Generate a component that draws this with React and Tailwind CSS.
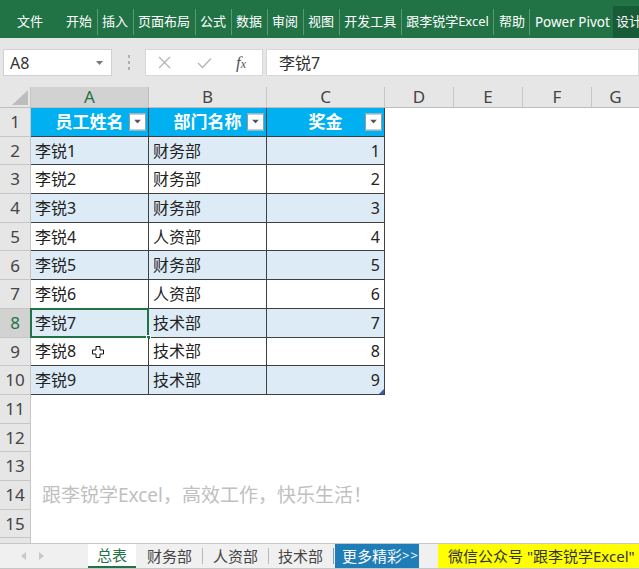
import React from "react";

const FONT = "font-[family-name:'Noto_Sans','Noto_Sans_CJK_SC',sans-serif]";

const TABS = ["开始", "插入", "页面布局", "公式", "数据", "审阅", "视图", "开发工具", "跟李锐学Excel", "帮助", "Power Pivot"];

const DATA = [
  ["李锐1", "财务部", 1],
  ["李锐2", "财务部", 2],
  ["李锐3", "财务部", 3],
  ["李锐4", "人资部", 4],
  ["李锐5", "财务部", 5],
  ["李锐6", "人资部", 6],
  ["李锐7", "技术部", 7],
  ["李锐8", "技术部", 8],
  ["李锐9", "技术部", 9],
];

function FilterBtn() {
  return (
    <div className="absolute right-[2px] top-1/2 -translate-y-1/2 w-[17px] h-[17px] bg-white border border-[#9a9a9a] flex items-center justify-center">
      <svg width="7" height="4" viewBox="0 0 7 4">
        <path d="M0 0 L7 0 L3.5 4 Z" fill="#555" />
      </svg>
    </div>
  );
}

function RowHead({ n, active }) {
  return (
    <div
      className={`w-[31px] shrink-0 h-full flex items-center justify-center border-r border-b border-[#c6c6c6] text-[17px] ${
        active ? "bg-[#d2d2d2] text-[#217346]" : "bg-[#e6e6e6] text-[#444]"
      }`}
    >
      {n}
    </div>
  );
}

function Cursor() {
  return (
    <svg className="absolute left-[61px] top-[8px]" width="12" height="12" viewBox="0 0 12 12">
      <path
        d="M4 0.5 H8 V4 H11.5 V8 H8 V11.5 H4 V8 H0.5 V4 H4 Z"
        fill="#fff"
        stroke="#111"
        strokeWidth="1"
      />
    </svg>
  );
}

export default function App() {
  return (
    <div className={`w-[639px] h-[569px] overflow-hidden flex flex-col bg-white ${FONT}`}>
      {/* Ribbon */}
      <div className="h-[38px] shrink-0 bg-[#217346] pt-[6px] flex text-white text-[13px] overflow-hidden">
        <div className="flex items-center h-[32px] flex-1 min-w-0 overflow-hidden whitespace-nowrap">
          <span className="ml-[17px] shrink-0">文件</span>
          <span className="ml-[23px] shrink-0">开始</span>
          {TABS.slice(1).map((t) => (
            <React.Fragment key={t}>
              <span className="mx-[4.5px] w-px h-[26px] shrink-0 bg-[#5a9876]" />
              <span className={`shrink-0 whitespace-nowrap ${t === "Power Pivot" ? "text-[13.5px]" : ""}`}>{t}</span>
            </React.Fragment>
          ))}
          <span className="ml-[4px] w-px h-[26px] shrink-0 bg-[#5a9876]" />
        </div>
        <div className="h-[32px] w-[26px] shrink-0 bg-[#185c37] flex items-center pl-[3px] whitespace-nowrap overflow-hidden">
          设计
        </div>
      </div>

      {/* Formula bar */}
      <div className="h-[49px] shrink-0 bg-[#e6e6e6] pt-[11px] flex items-start">
        <div className="ml-[3px] w-[109px] h-[27px] bg-white border border-[#d0d0d0] flex items-center pl-[6px] pr-[8px] text-[16px] text-[#333]">
          <span className="flex-1">A8</span>
          <svg width="7" height="4" viewBox="0 0 7 4">
            <path d="M0 0 L7 0 L3.5 4 Z" fill="#777" />
          </svg>
        </div>
        <div className="w-[33px] h-[27px] flex flex-col items-center justify-center gap-[3px]">
          <span className="w-[2px] h-[3px] bg-[#b0b0b0]" />
          <span className="w-[2px] h-[3px] bg-[#b0b0b0]" />
          <span className="w-[2px] h-[3px] bg-[#b0b0b0]" />
        </div>
        <div className="w-[118px] h-[27px] bg-white border border-[#d8d8d8] flex items-center">
          <svg className="ml-[12px]" width="13" height="13" viewBox="0 0 13 13">
            <path d="M1 1 L12 12 M12 1 L1 12" stroke="#b5b5b5" strokeWidth="1.3" />
          </svg>
          <svg className="ml-[26px]" width="15" height="12" viewBox="0 0 15 12">
            <path d="M1 6 L5.5 10.5 L14 1.5" stroke="#b5b5b5" strokeWidth="1.4" fill="none" />
          </svg>
          <span className="ml-[24px] text-[17px] italic text-[#555] font-[family-name:'Liberation_Serif',serif]">
            f<span className="text-[12px]">x</span>
          </span>
        </div>
        <div className="ml-[3px] flex-1 h-[27px] bg-white border border-[#d8d8d8] flex items-center pl-[12px] text-[16px] text-[#333]">
          李锐7
        </div>
      </div>

      {/* Grid */}
      <div className="flex-1 min-h-0 overflow-hidden flex flex-col">
        {/* Column headers */}
        <div className="h-[21px] shrink-0 flex bg-[#e6e6e6] text-[17px] text-[#444] border-b border-[#bdbdbd]">
          <div className="w-[31px] shrink-0 flex items-end justify-end pr-[2px] pb-[2px] border-r border-[#c6c6c6]">
            <svg width="16" height="15" viewBox="0 0 16 15">
              <path d="M16 0 L16 15 L0 15 Z" fill="#bdbdbd" />
            </svg>
          </div>
          <div className="w-[118px] shrink-0 flex items-center justify-center bg-[#d2d2d2] text-[#217346] border-r border-[#bdbdbd]">A</div>
          <div className="w-[118px] shrink-0 flex items-center justify-center border-r border-[#c6c6c6]">B</div>
          <div className="w-[118px] shrink-0 flex items-center justify-center border-r border-[#c6c6c6]">C</div>
          <div className="w-[69px] shrink-0 flex items-center justify-center border-r border-[#c6c6c6]">D</div>
          <div className="w-[69px] shrink-0 flex items-center justify-center border-r border-[#c6c6c6]">E</div>
          <div className="w-[69px] shrink-0 flex items-center justify-center border-r border-[#c6c6c6]">F</div>
          <div className="flex-1 flex items-center justify-center">G</div>
        </div>

        {/* Row 1: table header */}
        <div className="h-[28.7px] shrink-0 flex">
          <RowHead n={1} />
          {["员工姓名", "部门名称", "奖金"].map((h) => (
            <div
              key={h}
              className="relative w-[118px] shrink-0 h-full bg-[#00b0f0] border-r border-b border-[#404040] flex items-center justify-center text-white font-bold text-[17px]"
            >
              {h}
              <FilterBtn />
            </div>
          ))}
          <div className="flex-1" />
        </div>

        {/* Data rows */}
        {DATA.map(([name, dept, val], i) => {
          const rowNo = i + 2;
          const band = i % 2 === 0 ? "bg-[#ddebf7]" : "bg-white";
          const selected = rowNo === 8;
          const last = rowNo === 10;
          return (
            <div key={rowNo} className="h-[28.7px] shrink-0 flex text-[16px] text-[#222]">
              <RowHead n={rowNo} active={selected} />
              <div className={`relative w-[118px] shrink-0 h-full ${band} border-r border-b border-[#404040] flex items-center pl-[4px]`}>
                {name}
                {selected && (
                  <>
                    <div className="absolute -left-px -top-px -right-px -bottom-px border-2 border-[#217346]" />
                    <div className="absolute -right-[3px] -bottom-[3px] w-[5px] h-[5px] bg-[#217346] border border-white" />
                  </>
                )}
                {rowNo === 9 && <Cursor />}
              </div>
              <div className={`w-[118px] shrink-0 h-full ${band} border-r border-b border-[#404040] flex items-center pl-[4px]`}>
                {dept}
              </div>
              <div className={`relative w-[118px] shrink-0 h-full ${band} border-r border-b border-[#404040] flex items-center justify-end pr-[4px]`}>
                {val}
                {last && (
                  <svg className="absolute right-0 bottom-0" width="5" height="5" viewBox="0 0 5 5">
                    <path d="M5 0 L5 5 L0 5 Z" fill="#3b5aa8" />
                  </svg>
                )}
              </div>
              <div className="flex-1" />
            </div>
          );
        })}

        {/* Empty rows */}
        {[11, 12, 13, 14, 15, 16].map((n) => (
          <div key={n} className="h-[28.7px] shrink-0 flex">
            <RowHead n={n} />
            <div className="flex-1 flex items-center pl-[11px]">
              {n === 14 && (
                <span className="text-[19px] text-[#c0c0c0] whitespace-nowrap">
                  跟李锐学Excel，高效工作，快乐生活！
                </span>
              )}
            </div>
          </div>
        ))}
      </div>

      {/* Sheet tabs */}
      <div className="h-[26px] shrink-0 bg-[#f0f0f0] border-t border-b border-[#c6c6c6] flex items-stretch text-[15px] text-[#444]">
        <div className="w-[88px] shrink-0 flex items-center pl-[21px] gap-[13px]">
          <svg width="5" height="8" viewBox="0 0 5 8"><path d="M5 0 L0 4 L5 8 Z" fill="#c8c8c8" /></svg>
          <svg width="5" height="8" viewBox="0 0 5 8"><path d="M0 0 L5 4 L0 8 Z" fill="#c8c8c8" /></svg>
        </div>
        <div className="w-[48px] shrink-0 bg-white border-b-2 border-[#217346] flex items-center justify-center text-[#217346]">
          总表
        </div>
        <div className="w-[66px] shrink-0 flex items-center pl-[11px]">财务部</div>
        <span className="self-center w-px h-[16px] bg-[#b8b8b8]" />
        <div className="w-[65px] shrink-0 flex items-center pl-[10px]">人资部</div>
        <span className="self-center w-px h-[16px] bg-[#b8b8b8]" />
        <div className="w-[64px] shrink-0 flex items-center pl-[9px]">技术部</div>
        <span className="self-center w-px h-[16px] bg-[#7a9cc0]" />
        <div className="ml-[1px] w-[84px] shrink-0 bg-[#1f7db8] text-white flex items-center pl-[7px] whitespace-nowrap overflow-hidden">
          更多精彩<span className="text-[13px] tracking-[1px]">&gt;&gt;</span>
        </div>
        <div className="w-[19px] shrink-0" />
        <div className="flex-1 bg-[#ffff00] text-[#333] flex items-center pl-[10px] whitespace-nowrap">
          微信公众号 "跟李锐学Excel"
        </div>
      </div>
    </div>
  );
}
